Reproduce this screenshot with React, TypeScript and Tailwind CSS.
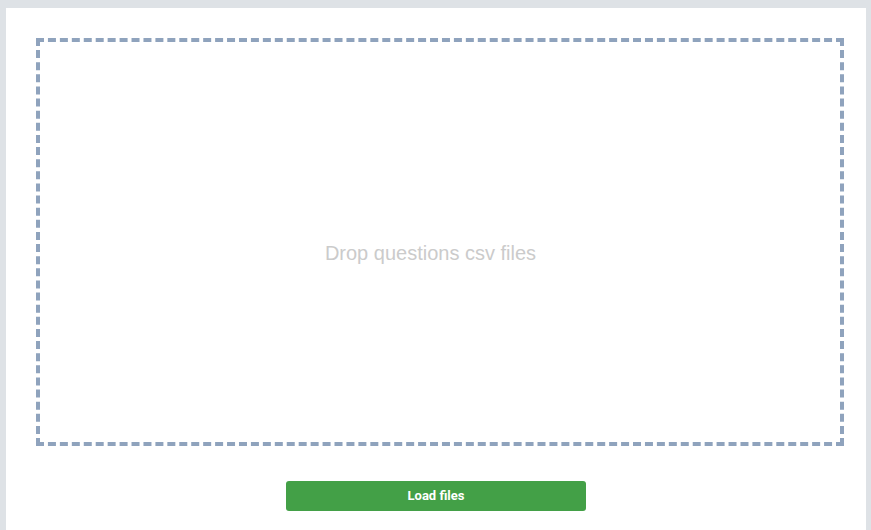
import React from 'react';

export default function App() {
  return (
    <div className="min-h-screen bg-[#dee2e6] pl-[6px] pr-[5px] pt-[8px] overflow-hidden">
      <div className="bg-white min-h-[530px] pl-[30px] pr-[22px] pt-[30px]">
        <div className="h-[408px] border-4 border-dashed border-[#8fa3bd] flex items-center justify-center pt-[22px] pr-[19px]">
          <span className="text-[20px] text-[#cbcbcb] font-['Liberation_Sans',Arial,sans-serif]">
            Drop questions csv files
          </span>
        </div>
        <div className="flex justify-center mt-[35px] -ml-[8px]">
          <button
            type="button"
            className="w-[300px] h-[30px] rounded-[3px] bg-[#43a047] text-white text-[13px] font-bold font-['Roboto',sans-serif]"
          >
            Load files
          </button>
        </div>
      </div>
    </div>
  );
}
